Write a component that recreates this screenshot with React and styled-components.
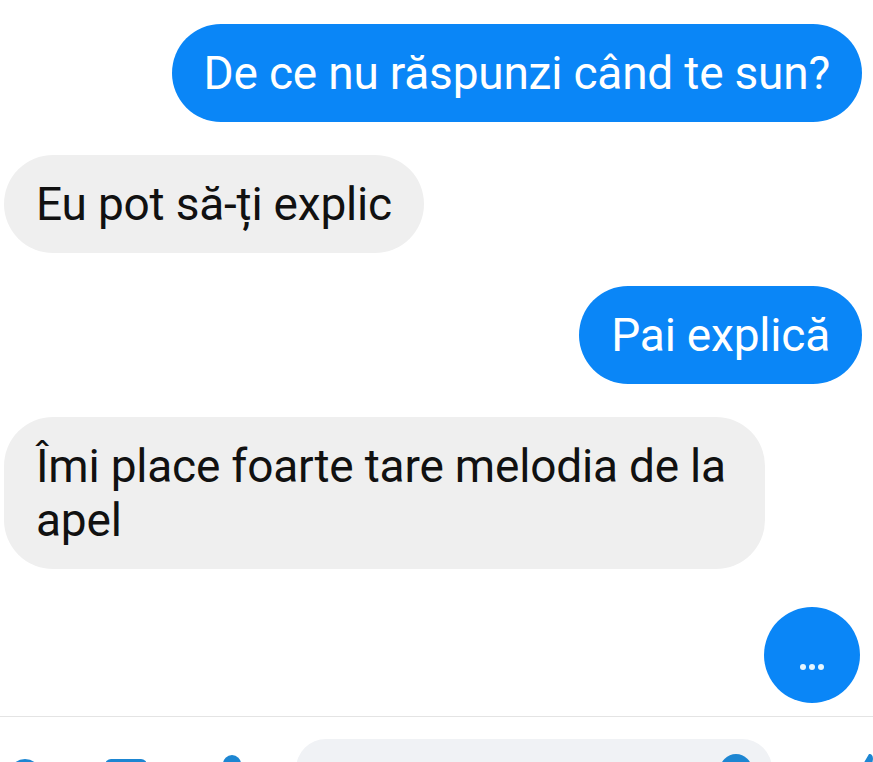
import React from 'react';
import styled, { createGlobalStyle } from 'styled-components';

const GlobalStyle = createGlobalStyle`
  html, body {
    margin: 0;
    padding: 0;
    background: #ffffff;
    overflow: hidden;
  }
  body {
    font-family: Roboto, "Noto Sans", "Liberation Sans", sans-serif;
  }
`;

const Screen = styled.div`
  width: 873px;
  height: 762px;
  display: flex;
  flex-direction: column;
  overflow: hidden;
  background: #fff;
`;

const Thread = styled.div`
  display: flex;
  flex-direction: column;
  gap: 33px;
  padding: 24px 11px 0 4px;
`;

const Bubble = styled.div`
  align-self: ${({ $mine }) => ($mine ? 'flex-end' : 'flex-start')};
  box-sizing: border-box;
  max-width: 761px;
  padding: 22px 32px;
  border-radius: 49px;
  background: ${({ $mine }) => ($mine ? '#0a86f7' : '#efefef')};
  color: ${({ $mine }) => ($mine ? '#ffffff' : '#111111')};
  font-size: 46px;
  line-height: 54px;
  letter-spacing: -0.2px;
`;

const Typing = styled.div`
  align-self: flex-end;
  width: 96px;
  height: 96px;
  margin: 5px 2px 0 0;
  border-radius: 50%;
  background: #0a86f7;
  display: flex;
  align-items: center;
  justify-content: center;
  gap: 3px;
  padding-top: 24px;
  box-sizing: border-box;
`;

const Dot = styled.span`
  width: 6px;
  height: 6px;
  border-radius: 50%;
  background: #e6f6ff;
`;

const Composer = styled.div`
  margin-top: 13px;
  border-top: 1px solid #e4e4e4;
  padding: 22px 0 0 0;
  display: flex;
  align-items: flex-start;
  height: 80px;
`;

const Slot = styled.div`
  flex: none;
  margin-left: ${({ $left }) => $left}px;
  margin-top: ${({ $top }) => $top}px;
  color: #1d86d2;
  display: flex;
`;

const InputPill = styled.div`
  flex: none;
  margin-left: ${({ $left }) => $left}px;
  width: 476px;
  height: 60px;
  border-radius: 30px;
  background: #f0f2f5;
  display: flex;
  justify-content: flex-end;
  padding: 15px 20px 0 0;
  box-sizing: border-box;
  color: #1d86d2;
`;

const PlusIcon = () => (
  <svg width="34" height="34" viewBox="0 0 34 34">
    <circle cx="17" cy="17" r="16" fill="currentColor" />
    <path d="M17 9v16M9 17h16" stroke="#fff" strokeWidth="3" strokeLinecap="round" />
  </svg>
);

const PhotoIcon = () => (
  <svg width="44" height="36" viewBox="0 0 44 36">
    <rect x="1" y="1" width="42" height="34" rx="6" fill="currentColor" />
    <circle cx="14" cy="12" r="4" fill="#fff" />
    <path d="M6 30l11-11 7 7 6-5 8 9z" fill="#fff" />
  </svg>
);

const MicIcon = () => (
  <svg width="28" height="40" viewBox="0 0 28 40">
    <rect x="5" y="0" width="18" height="26" rx="9" fill="currentColor" />
    <path d="M2 18a12 12 0 0 0 24 0M14 30v8" stroke="currentColor" strokeWidth="3" fill="none" strokeLinecap="round" />
  </svg>
);

const EmojiIcon = () => (
  <svg width="32" height="32" viewBox="0 0 32 32">
    <circle cx="16" cy="16" r="16" fill="currentColor" />
    <circle cx="11" cy="13" r="2.5" fill="#f0f2f5" />
    <circle cx="21" cy="13" r="2.5" fill="#f0f2f5" />
    <path d="M9 19a7 7 0 0 0 14 0z" fill="#f0f2f5" />
  </svg>
);

const LikeIcon = () => (
  <svg width="36" height="36" viewBox="0 0 36 36">
    <path
      d="M3 15h6v18H3zM12 15l7-12c3 0 4 2 4 5l-1 6h9c2 0 4 2 3 4l-3 11c-1 2-2 3-4 3H12z"
      fill="currentColor"
    />
  </svg>
);

const messages = [
  { mine: true, text: 'De ce nu răspunzi când te sun?' },
  { mine: false, text: 'Eu pot să-ți explic' },
  { mine: true, text: 'Pai explică' },
  { mine: false, text: 'Îmi place foarte tare melodia de la apel' },
];

export default function App() {
  return (
    <Screen>
      <GlobalStyle />
      <Thread>
        {messages.map((m, i) => (
          <Bubble key={i} $mine={m.mine}>
            {m.text}
          </Bubble>
        ))}
        <Typing>
          <Dot />
          <Dot />
          <Dot />
        </Typing>
      </Thread>
      <Composer>
        <Slot $left={8} $top={19}>
          <PlusIcon />
        </Slot>
        <Slot $left={62} $top={19}>
          <PhotoIcon />
        </Slot>
        <Slot $left={70} $top={16}>
          <MicIcon />
        </Slot>
        <InputPill $left={50}>
          <EmojiIcon />
        </InputPill>
        <Slot $left={78} $top={12}>
          <LikeIcon />
        </Slot>
      </Composer>
    </Screen>
  );
}
